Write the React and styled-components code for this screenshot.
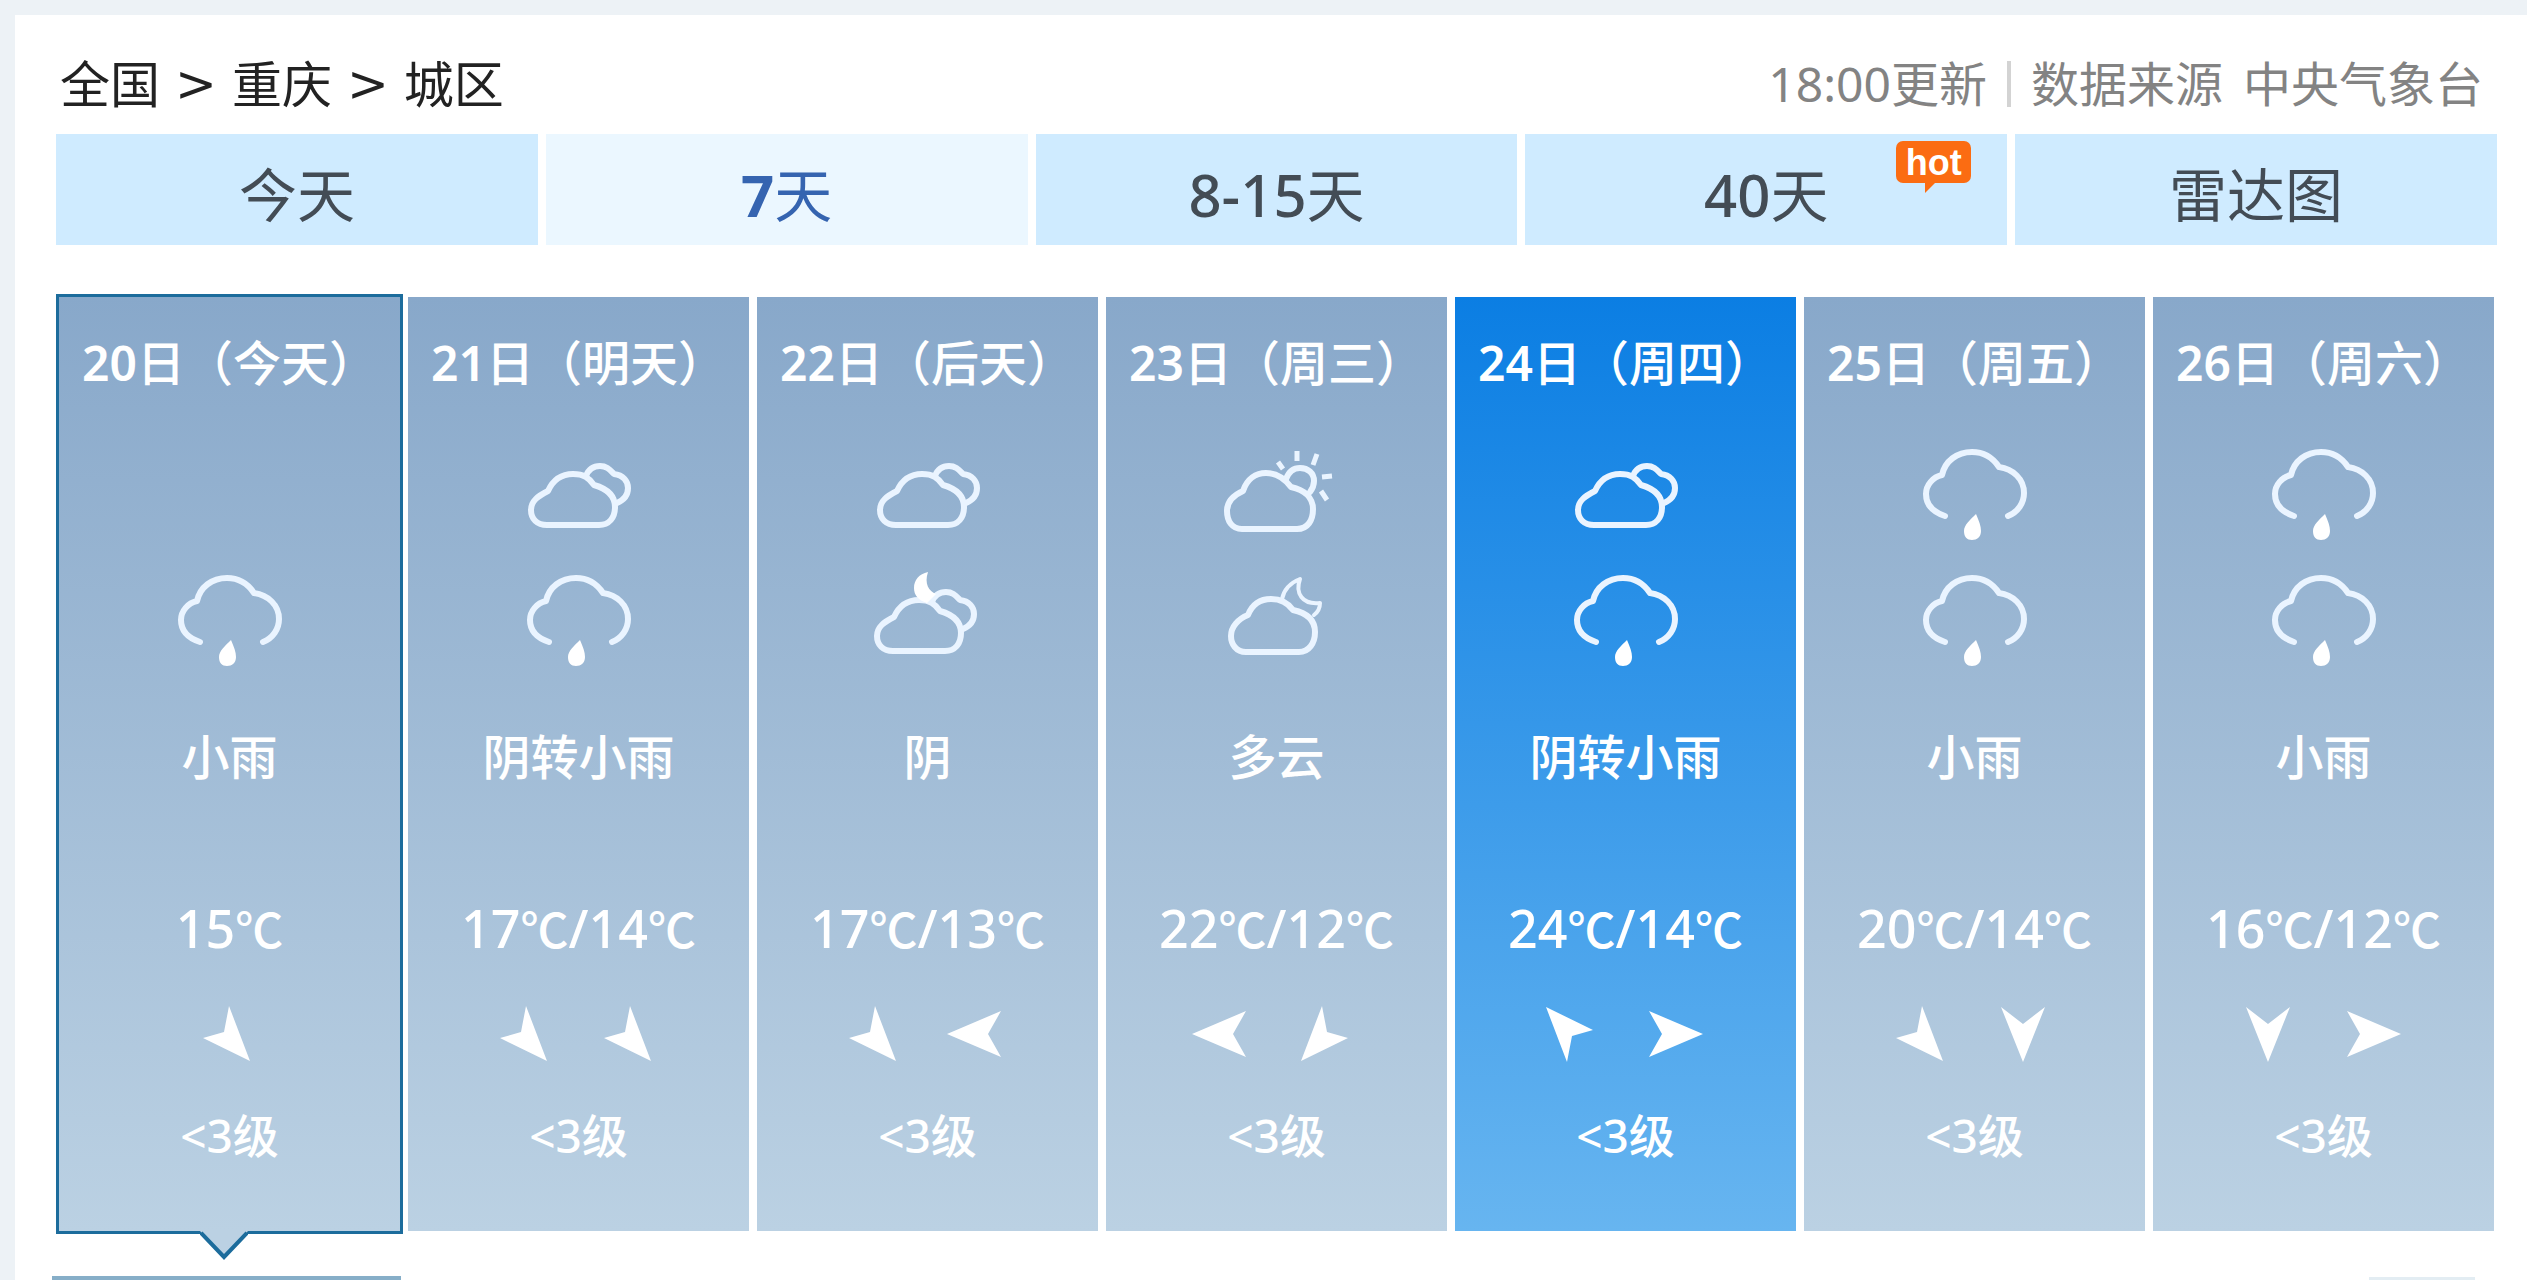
import React from 'react';
import styled, { createGlobalStyle } from 'styled-components';

const COLORS = {
  page: '#edf2f6',
  text: '#222222',
  muted: '#838383',
  tab: '#cfebff',
  tabActive: '#ebf7ff',
  tabText: '#434c55',
  link: '#3564b0',
  border: '#1c6c9c',
  hot: '#fb6c12',
};

const CRUMBS = ['全国', '重庆', '城区'];

const TABS = [
  { label: '今天' },
  { number: '7', label: '天', active: true },
  { number: '8-15', label: '天' },
  { number: '40', label: '天', hot: true },
  { label: '雷达图' },
];

const DAYS = [
  { date: '20', name: '今天', icons: [null, 'rain'], weather: '小雨', temp: ['15'], wind: ['se'], today: true },
  { date: '21', name: '明天', icons: ['overcast', 'rain'], weather: '阴转小雨', temp: ['17', '14'], wind: ['se', 'se'] },
  { date: '22', name: '后天', icons: ['overcast', 'overcastNight'], weather: '阴', temp: ['17', '13'], wind: ['se', 'w'] },
  { date: '23', name: '周三', icons: ['cloudy', 'cloudyNight'], weather: '多云', temp: ['22', '12'], wind: ['w', 'sw'] },
  { date: '24', name: '周四', icons: ['overcast', 'rain'], weather: '阴转小雨', temp: ['24', '14'], wind: ['nw', 'e'], selected: true },
  { date: '25', name: '周五', icons: ['rain', 'rain'], weather: '小雨', temp: ['20', '14'], wind: ['se', 's'] },
  { date: '26', name: '周六', icons: ['rain', 'rain'], weather: '小雨', temp: ['16', '12'], wind: ['s', 'e'] },
];

const ARROWS = {
  s: '10,6 32,23 54,6 32,61',
  e: '7,10 61,33 7,56 20,33',
  w: '57,10 3,33 57,56 44,33',
  se: '35,5 56,60 9,37 30,31',
  sw: '29,5 8,60 55,37 34,31',
  nw: '29,61 8,6 55,29 34,35',
};

const OvercastCloud = () => (
  <>
    <path d="M67 45 C70 37 75 35 81 35 C88 35 91 39 95 43 C104 44 109 50 109 57 C109 64 105 69 98 72" />
    <path d="M28 94 C18 94 12 88 12 79 C12 70 19 65 29 60 C34 49 43 43 54 43 C65 43 70 47 75 54 C89 58 96 65 96 76 C96 87 90 94 80 94 Z" />
  </>
);

const ICONS = {
  rain: (
    <>
      <path d="M30 85 C18 81 11 74 11 63 C11 54 18 46 27 44 C30 30 42 21 57 21 C69 21 78 27 84 36 C98 38 109 48 109 62 C109 72 103 81 93 85" />
      <path d="M61 83 C64 90 66 95 66 100 C66 106 62 109 57 109 C52 109 49 106 49 100 C49 94 55 89 61 83 Z" fill="#fff" stroke="none" />
    </>
  ),
  overcast: <OvercastCloud />,
  overcastNight: (
    <g transform="translate(-3 0)">
      <OvercastCloud />
      <path d="M63 15 C54 17 49 23 49 31 C49 38 53 43 62 46 L71 37 C64 34 59 27 63 15 Z" fill="#fff" stroke="none" />
    </g>
  ),
  cloudy: (
    <>
      <path d="M25 98 C15 98 10 90 10 80 C10 70 17 64 26 60 C30 48 39 42 49 42 C60 42 68 48 74 56 C88 59 96 67 96 78 C96 89 91 98 80 98 Z" />
      <path d="M69 48 C72 40 77 37 83 37 C91 37 97 42 97 50 C97 54 96 57 93 61" />
      <path d="M80 20 V30 M100 23 L96 34 M61 31 L66 38 M105 46 L115 45 M104 60 L110 69" strokeWidth="5" strokeLinecap="butt" />
    </>
  ),
  cloudyNight: (
    <>
      <path d="M29 95 C19 95 14 87 14 79 C14 70 21 62 31 58 C35 48 43 42 54 42 C64 42 71 46 76 53 C90 56 98 63 98 75 C98 86 92 95 82 95 Z" />
      <path d="M65 42 C67 32 73 26 83 22 C78 36 85 48 103 46 C103 51 101 55 97 58" strokeWidth="4" />
    </>
  ),
};

const WeatherIcon = ({ type }) => (
  <IconSvg viewBox="0 0 120 126" aria-hidden="true">
    {type && ICONS[type]}
  </IconSvg>
);

const DayCard = ({ date, name, icons, weather, temp, wind, today, selected }) => (
  <Card $today={today} $selected={selected}>
    <DateTitle>
      <Num>{date}</Num>日（{name}）
    </DateTitle>
    <IconColumn>
      {icons.map((type, index) => (
        <WeatherIcon key={index} type={type} />
      ))}
    </IconColumn>
    <Weather>{weather}</Weather>
    <Temperature>
      {temp.map((value, index) => (
        <React.Fragment key={index}>
          {index > 0 && '/'}
          {value}
          <Unit>℃</Unit>
        </React.Fragment>
      ))}
    </Temperature>
    <WindRow>
      {wind.map((direction, index) => (
        <ArrowSvg key={index} viewBox="0 0 64 64" aria-hidden="true">
          <polygon points={ARROWS[direction]} />
        </ArrowSvg>
      ))}
    </WindRow>
    <WindLevel>&lt;3级</WindLevel>
    {today && (
      <Pointer viewBox="0 0 48 32" aria-hidden="true">
        <path d="M0 0 H48 L24 26 Z" fill="#bbd1e3" />
        <path d="M1 2 L24 26 L47 2" fill="none" stroke={COLORS.border} strokeWidth="4" />
      </Pointer>
    )}
  </Card>
);

const App = () => {
  return (
    <>
      <GlobalStyle />
      <Panel>
        <Header>
          <Breadcrumb aria-label="位置">
            {CRUMBS.map((crumb, index) => (
              <React.Fragment key={crumb}>
                {index > 0 && <Separator>&gt;</Separator>}
                <CrumbLink href="#">{crumb}</CrumbLink>
              </React.Fragment>
            ))}
          </Breadcrumb>
          <Source>
            <span>18:00更新</span>
            <Divider />
            <span>数据来源</span>
            <span>中央气象台</span>
          </Source>
        </Header>

        <Tabs>
          {TABS.map(({ number, label, active, hot }) => (
            <Tab key={number || label} type="button" $active={active}>
              {number && <TabNumber $active={active}>{number}</TabNumber>}
              {label}
              {hot && <HotBadge>hot</HotBadge>}
            </Tab>
          ))}
        </Tabs>

        <Days>
          {DAYS.map((day) => (
            <DayCard key={day.date} {...day} />
          ))}
        </Days>

        <NextSection>
          <NextHeading />
          <NextControl />
        </NextSection>
      </Panel>
    </>
  );
};

const GlobalStyle = createGlobalStyle`
  * {
    box-sizing: border-box;
  }
  body {
    margin: 0;
    background: ${COLORS.page};
    font-family: 'Noto Sans', 'Noto Sans CJK SC', sans-serif;
  }
`;

const Panel = styled.main`
  margin: 15px 0 0 15px;
  padding: 0 30px 0 41px;
  background: #fff;
`;

const Header = styled.header`
  display: flex;
  align-items: center;
  justify-content: space-between;
  height: 119px;
  padding: 18px 14px 0 4px;
  white-space: nowrap;
`;

const Breadcrumb = styled.nav`
  display: flex;
  align-items: center;
  gap: 15px;
  font-size: 50px;
  line-height: 64px;
`;

const CrumbLink = styled.a`
  color: ${COLORS.text};
  text-decoration: none;
`;

const Separator = styled.span`
  color: ${COLORS.text};
  font-family: 'DejaVu Sans', sans-serif;
`;

const Source = styled.div`
  display: flex;
  align-items: center;
  gap: 20px;
  color: ${COLORS.muted};
  font-size: 48px;
  line-height: 64px;
`;

const Divider = styled.i`
  width: 4px;
  height: 46px;
  background: #d3d3d3;
`;

const Tabs = styled.nav`
  display: grid;
  grid-template-columns: repeat(5, 1fr);
  gap: 8px;
`;

const Tab = styled.button`
  position: relative;
  height: 111px;
  padding: 10px 0 0;
  border: 0;
  background: ${(props) => (props.$active ? COLORS.tabActive : COLORS.tab)};
  color: ${(props) => (props.$active ? COLORS.link : COLORS.tabText)};
  font-family: inherit;
  font-size: 58px;
  line-height: 80px;
`;

const TabNumber = styled.span`
  font-weight: ${(props) => (props.$active ? 700 : 500)};
`;

const HotBadge = styled.span`
  position: absolute;
  top: 7px;
  right: 36px;
  width: 75px;
  height: 42px;
  border-radius: 7px;
  background: ${COLORS.hot};
  color: #fff;
  font-family: 'Liberation Sans', sans-serif;
  font-size: 36px;
  font-weight: 700;
  line-height: 44px;

  &::after {
    content: '';
    position: absolute;
    top: 42px;
    left: 29px;
    border-top: 10px solid ${COLORS.hot};
    border-right: 10px solid transparent;
  }
`;

const Days = styled.ul`
  display: grid;
  grid-template-columns: repeat(7, 1fr);
  gap: 8px;
  margin: 52px 3px 0;
  padding: 0;
  list-style: none;
`;

const Card = styled.li`
  position: relative;
  display: flex;
  flex-direction: column;
  align-items: center;
  padding: 34px 0 62px;
  background: ${(props) =>
    props.$selected
      ? 'linear-gradient(#0b7ee3, #67b5f0)'
      : 'linear-gradient(#88a8ca, #bbd1e3)'};
  box-shadow: ${(props) => (props.$today ? `0 0 0 3px ${COLORS.border}` : 'none')};
  color: #fff;
  line-height: 64px;
  white-space: nowrap;
`;

const DateTitle = styled.h2`
  margin: 0;
  font-size: 48px;
  font-weight: 500;
`;

const Num = styled.span`
  font-weight: 600;
`;

const IconColumn = styled.div`
  display: flex;
  flex-direction: column;
  margin-top: 36px;
`;

const IconSvg = styled.svg`
  width: 120px;
  height: 126px;
  fill: none;
  stroke: #eaf4ff;
  stroke-width: 6;
  stroke-linecap: round;
  stroke-linejoin: round;
`;

const Weather = styled.div`
  margin-top: 42px;
  font-size: 48px;
  font-weight: 500;
`;

const Temperature = styled.div`
  height: 64px;
  margin-top: 106px;
  font-size: 52px;
  font-weight: 500;
`;

const Unit = styled.span`
  font-family: 'Noto Sans CJK SC', sans-serif;
  font-size: 48px;
`;

const WindRow = styled.div`
  display: flex;
  gap: 40px;
  margin-top: 42px;
  padding-right: 8px;
`;

const ArrowSvg = styled.svg`
  width: 64px;
  height: 64px;
  fill: #fff;
`;

const WindLevel = styled.div`
  margin: 38px 0 2px;
  font-size: 46px;
  font-weight: 500;
`;

const Pointer = styled.svg`
  position: absolute;
  top: 100%;
  left: calc(50% - 30px);
  width: 48px;
  height: 32px;
`;

const NextSection = styled.section`
  display: flex;
  align-items: flex-end;
  justify-content: space-between;
  height: 49px;
  margin: 0 22px 0 -4px;
`;

const NextHeading = styled.div`
  width: 349px;
  height: 4px;
  background: #86aec8;
`;

const NextControl = styled.div`
  width: 106px;
  height: 3px;
  background: #e3edf3;
`;

export default App;
